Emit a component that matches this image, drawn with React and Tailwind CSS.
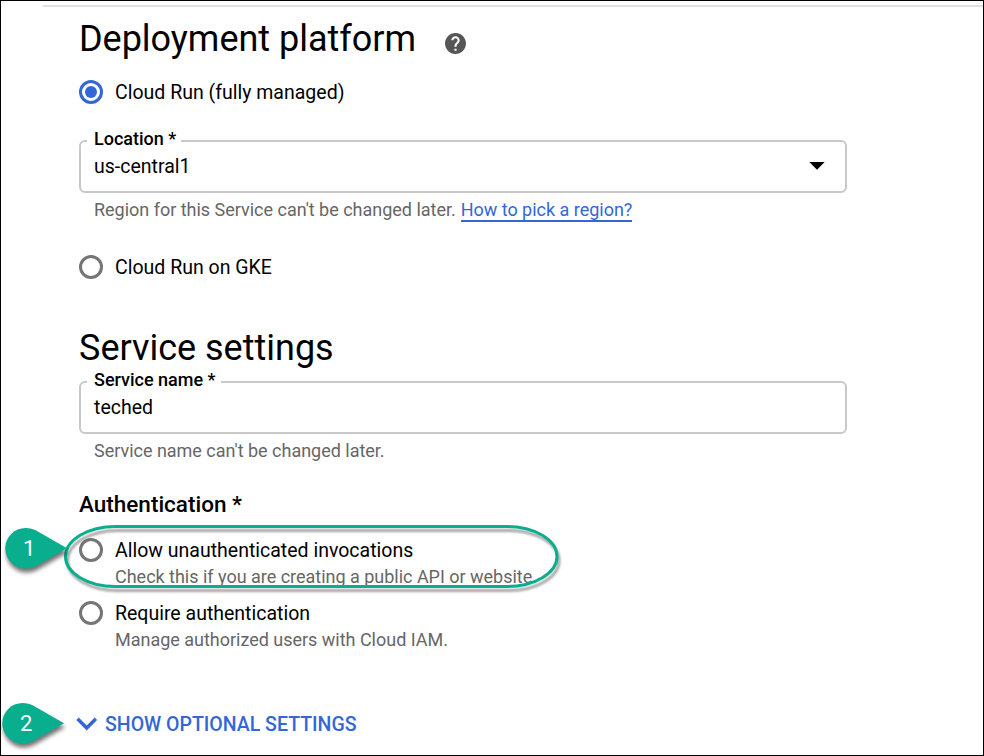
function Radio({ checked }) {
  return (
    <span
      className={
        "flex h-6 w-6 shrink-0 items-center justify-center rounded-full border-3 " +
        (checked ? "border-[#3367d6]" : "border-[#757575]")
      }
    >
      {checked && <span className="h-3 w-3 rounded-full bg-[#3367d6]" />}
    </span>
  );
}

function RadioRow({ label, checked, className }) {
  return (
    <label className={"flex h-6 items-center gap-3 text-[19.5px] leading-6 text-black " + className}>
      <Radio checked={checked} />
      <span className="pt-0.5">{label}</span>
    </label>
  );
}

function Field({ label, value, children, className }) {
  return (
    <div
      className={
        "relative flex h-[53px] w-[768px] items-center justify-between rounded-md border-2 border-[#c8c8c8] pr-5 pl-[13px] " +
        className
      }
    >
      <span className="absolute -top-[15px] left-[6px] bg-white pr-[5px] pl-[7px] text-[18px] leading-6 font-medium text-black">
        {label}
      </span>
      <span className="text-[19.5px] leading-6 text-black">{value}</span>
      {children}
    </div>
  );
}

function Pin({ number, className }) {
  return (
    <div className={"absolute h-[41px] w-[63px] " + className}>
      <svg
        className="absolute inset-0 overflow-visible drop-shadow-[1px_4px_2px_rgba(0,0,0,0.55)]"
        width="63"
        height="41"
        viewBox="0 0 63 41"
      >
        <path
          d="M20.5 0C25 0 28 1.200 31 2.500L62 20.300L31 38C28 39.600 25 40.500 20.500 40.500A20.250 20.250 0 0 1 20.500 0Z"
          fill="#08ae8e"
        />
      </svg>
      <span className="absolute top-[9px] left-[18px] text-[22px] leading-6 text-white">{number}</span>
    </div>
  );
}

export default function App() {
  return (
    <div className="relative h-[756px] w-[984px] overflow-hidden border border-black bg-white font-['Roboto',sans-serif] whitespace-nowrap">
      <div className="mt-1 ml-[42px] h-0.5 bg-[#e0e0e0]" />
      <main className="flex flex-col pl-[78px]">
        <div className="mt-2 flex h-12 items-center gap-[29px]">
          <h1 className="text-[36px] leading-[48px] tracking-[-0.02px] text-black">Deployment platform</h1>
          <svg className="mt-[9px]" width="21" height="21" viewBox="2 2 20 20" fill="#565656">
            <path d="M12 2C6.480 2 2 6.480 2 12s4.480 10 10 10 10-4.480 10-10S17.520 2 12 2zm1 17h-2v-2h2v2zm2.070-7.750-.9.920C13.450 12.900 13 13.500 13 15h-2v-.5c0-1.100.450-2.100 1.170-2.830l1.240-1.260c.370-.360.590-.860.590-1.410 0-1.100-.9-2-2-2s-2 .9-2 2H8c0-2.210 1.790-4 4-4s4 1.790 4 4c0 .880-.360 1.680-.930 2.250z" />
          </svg>
        </div>

        <RadioRow className="mt-[17px]" label="Cloud Run (fully managed)" checked />
        <Field className="mt-9" label="Location *" value="us-central1">
          <svg className="mb-0.5" width="16" height="8" viewBox="0 0 16 8">
            <path d="M0.300 0H15.700L8 7.700Z" fill="#000" />
          </svg>
        </Field>
        <p className="mt-[5px] flex h-6 gap-[5px] pl-[15px] text-[18px] leading-6 tracking-[-0.015px] text-[#666666]">
          <span>Region for this Service can't be changed later.</span>
          <a className="h-6 border-b-2 border-[#3367d6] text-[#3367d6]">How to pick a region?</a>
        </p>
        <RadioRow className="mt-[33px]" label="Cloud Run on GKE" />

        <h1 className="mt-[45px] text-[36px] leading-[48px] text-black">Service settings</h1>
        <Field className="mt-[9px]" label="Service name *" value="teched" />
        <p className="mt-[5px] pl-[15px] text-[18px] leading-6 tracking-[-0.015px] text-[#666666]">
          Service name can't be changed later.
        </p>

        <h2 className="mt-[27px] text-[22.5px] leading-7 font-medium text-black">Authentication *</h2>
        <RadioRow className="mt-5" label="Allow unauthenticated invocations" />
        <p className="mt-[3px] pl-9 text-[18px] leading-6 tracking-[-0.015px] text-[#666666]">
          Check this if you are creating a public API or website.
        </p>
        <RadioRow className="mt-3" label="Require authentication" />
        <p className="mt-[3px] pl-9 text-[18px] leading-6 tracking-[-0.015px] text-[#666666]">
          Manage authorized users with Cloud IAM.
        </p>

        <button className="mt-[60px] -ml-[3px] flex h-6 items-center gap-[7px] text-[19.5px] leading-6 font-medium text-[#3367d6]">
          <svg className="mb-px" width="22" height="14" viewBox="0 0 22 14" fill="none" stroke="#3367d6" strokeWidth="3.4">
            <path d="M1.500 1.800L10.700 11L19.900 1.800" />
          </svg>
          <span className="pt-0.5">SHOW OPTIONAL SETTINGS</span>
        </button>
      </main>

      <svg
        className="absolute top-[524px] left-[63px] overflow-visible drop-shadow-[2px_4px_1px_rgba(0,0,0,0.35)]"
        width="495"
        height="63"
        viewBox="0 0 495 63"
      >
        <rect x="1.500" y="1.500" width="491.500" height="60" rx="50" ry="30" fill="none" stroke="#08ae8e" strokeWidth="3" />
      </svg>
      <Pin number="1" className="top-[527px] left-1" />
      <Pin number="2" className="top-[702px] left-px" />
    </div>
  );
}
